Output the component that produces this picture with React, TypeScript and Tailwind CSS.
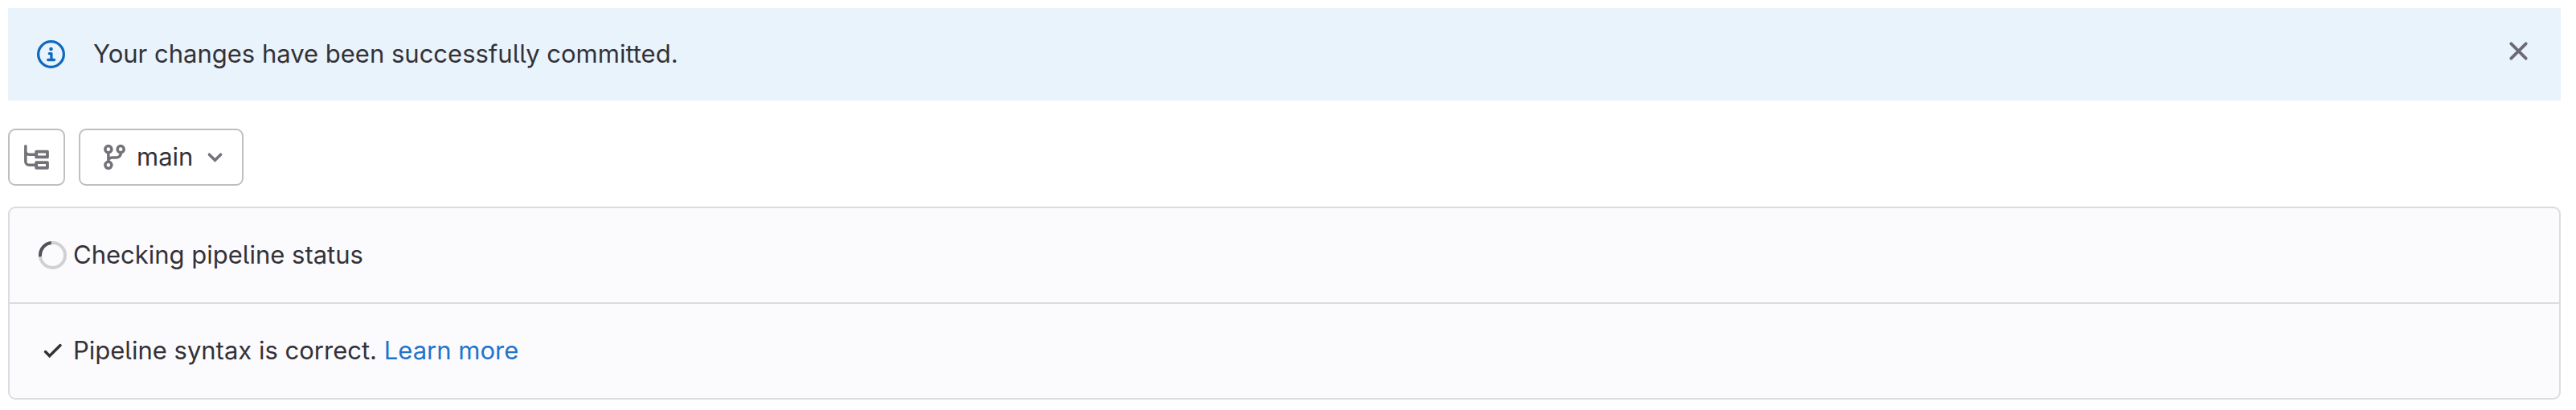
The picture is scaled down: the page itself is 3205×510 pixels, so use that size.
import type { ReactNode } from "react";

type IconProps = { children: ReactNode; className?: string };

function Icon({ children, className = "" }: IconProps) {
  return (
    <svg
      viewBox="0 0 16 16"
      aria-hidden="true"
      fill="none"
      stroke="currentColor"
      strokeWidth="1.6"
      className={`size-[35px] shrink-0 ${className}`}
    >
      {children}
    </svg>
  );
}

function InfoIcon() {
  return (
    <Icon className="text-[#1068bf]">
      <circle cx="8" cy="8" r="7.25" strokeWidth="1.5" />
      <circle cx="8" cy="5" r="1.05" fill="currentColor" stroke="none" />
      <path d="M7 7.6h1.2v3.6M6.25 11.2h3.6" strokeWidth="1.5" strokeLinecap="round" strokeLinejoin="round" />
    </Icon>
  );
}

function CloseIcon() {
  return (
    <Icon>
      <path d="M3.8 3.8l8.4 8.4M12.2 3.8l-8.4 8.4" strokeWidth="1.75" strokeLinecap="round" />
    </Icon>
  );
}

function FileTreeIcon() {
  return (
    <Icon className="text-[#737278]">
      <path d="M1.75 1.75v8.75a2 2 0 0 0 2 2H7M1.75 4.5a2 2 0 0 0 2 2H7" strokeLinecap="round" />
      <path
        d="M7.85 4.85h6.3v3.1h-6.3zM7.85 11h6.3v3.1h-6.3z"
        strokeWidth="1.75"
        strokeLinejoin="round"
      />
    </Icon>
  );
}

function BranchIcon() {
  return (
    <Icon className="text-[#737278]">
      <circle cx="4.5" cy="3.5" r="1.85" />
      <circle cx="11.5" cy="3.5" r="1.85" />
      <circle cx="4.5" cy="12.5" r="1.85" />
      <path d="M4.5 5.4v5.2M4.5 10.2a2 2 0 0 1 2-2h2.6a2.4 2.4 0 0 0 2.4-2.8" />
    </Icon>
  );
}

function ChevronIcon() {
  return (
    <Icon className="text-[#737278]">
      <path d="M4.75 6.5L8 9.75l3.25-3.25" strokeLinecap="round" />
    </Icon>
  );
}

function Spinner() {
  return (
    <Icon>
      <circle cx="8" cy="8" r="7.1" stroke="#d0d0d3" strokeWidth="1.8" />
      <path d="M0.95 8.8A7.1 7.1 0 0 1 7.2 0.95" stroke="#535158" strokeWidth="1.8" />
    </Icon>
  );
}

function CheckIcon() {
  return (
    <Icon>
      <path d="M3.9 8.5l2.35 2.35 6.1-6" strokeLinecap="round" />
    </Icon>
  );
}

function StatusRow({ icon, children }: { icon: ReactNode; children: ReactNode }) {
  return (
    <div className="flex items-center gap-2 px-9 py-[37px]">
      {icon}
      <p className="pb-0.5">{children}</p>
    </div>
  );
}

export default function App() {
  return (
    <main className="bg-white py-2.5 pr-[19px] pl-2.5 font-['Inter',sans-serif] text-[31px] leading-[41px] text-[#333238] [font-feature-settings:'cv05']">
      <div role="status" className="flex items-center gap-[35px] bg-[#e9f3fc] py-9 pr-[35px] pl-9">
        <InfoIcon />
        <p className="grow pb-0.5">Your changes have been successfully committed.</p>
        <button type="button" aria-label="Dismiss" className="-mt-2 text-[#6b6a75]">
          <CloseIcon />
        </button>
      </div>

      <div className="mt-[35px] flex gap-[17px]">
        <button
          type="button"
          aria-label="Show file tree"
          className="rounded-[9px] border-2 border-[#bfbfc3] bg-white p-4"
        >
          <FileTreeIcon />
        </button>
        <button
          type="button"
          aria-haspopup="listbox"
          className="flex items-center gap-2.5 rounded-[9px] border-2 border-[#bfbfc3] bg-white py-3 pr-4 pl-[25px]"
        >
          <BranchIcon />
          <span className="pb-0.5">main</span>
          <ChevronIcon />
        </button>
      </div>

      <section className="mt-[26px] divide-y-2 divide-[#dcdcde] rounded-[9px] border-2 border-[#dcdcde] bg-[#fbfafd]">
        <StatusRow icon={<Spinner />}>Checking pipeline status</StatusRow>
        <StatusRow icon={<CheckIcon />}>
          Pipeline syntax is correct.{" "}
          <a href="#learn-more" className="text-[#1f75cb]">
            Learn more
          </a>
        </StatusRow>
      </section>
    </main>
  );
}
